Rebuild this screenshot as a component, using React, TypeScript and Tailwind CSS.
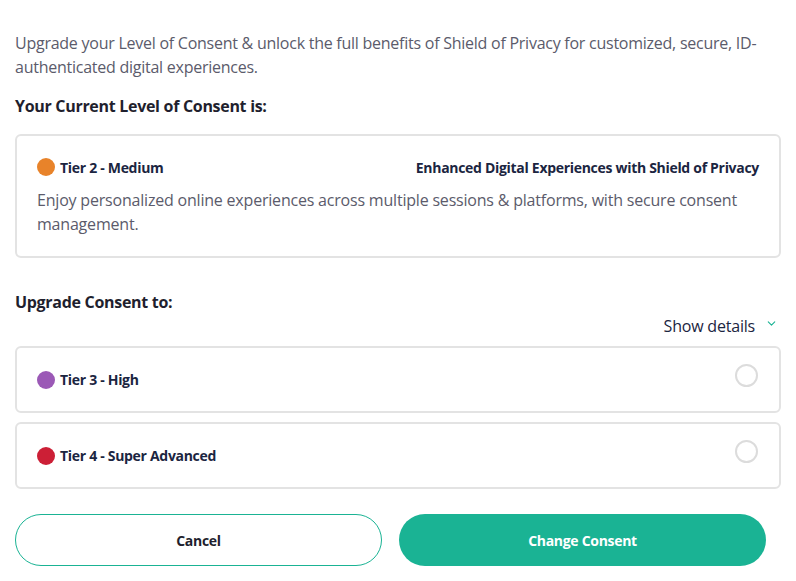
import { ChevronDown } from "lucide-react";

const font = { fontFamily: '"Open Sans", "Noto Sans", sans-serif' };

function TierCard({ color, label }: { color: string; label: string }) {
  return (
    <div className="flex items-center justify-between h-[67px] border-2 border-[#e3e3e3] rounded-md pl-5 pr-5">
      <div className="flex items-center gap-[5px]">
        <span className={`w-[18px] h-[18px] rounded-full ${color}`} />
        <span className="text-[14px] font-bold tracking-[-0.3px] text-[#1b2541]">{label}</span>
      </div>
      <span className="w-[23px] h-[23px] rounded-full border-2 border-[#dcdcdc] -mt-[8px] mr-[1px]" />
    </div>
  );
}

export default function App() {
  return (
    <div className="w-[796px] h-[581px] bg-white px-[15px] pt-[31px]" style={font}>
      <p className="text-[16px] leading-6 tracking-[-0.25px] text-[#5b5b6b]">
        Upgrade your Level of Consent &amp; unlock the full benefits of Shield of Privacy for customized, secure, ID-authenticated digital experiences.
      </p>

      <h2 className="mt-[15px] text-[16px] leading-6 font-bold tracking-[-0.3px] text-[#1f1f2e]">
        Your Current Level of Consent is:
      </h2>

      <div className="mt-4 border-2 border-[#e3e3e3] rounded-md px-5 pt-[21px] pb-[20px]">
        <div className="flex items-center justify-between h-5">
          <div className="flex items-center gap-[5px]">
            <span className="w-[18px] h-[18px] rounded-full bg-[#e8832a]" />
            <span className="text-[14px] font-bold tracking-[-0.3px] text-[#1b2541]">Tier 2 - Medium</span>
          </div>
          <span className="text-[14px] font-bold tracking-[-0.3px] text-[#1b2541]">
            Enhanced Digital Experiences with Shield of Privacy
          </span>
        </div>
        <p className="mt-[11px] text-[16px] leading-6 tracking-[-0.2px] text-[#5b5b6b]">
          Enjoy personalized online experiences across multiple sessions &amp; platforms, with secure consent management.
        </p>
      </div>

      <h2 className="mt-8 text-[16px] leading-6 font-bold tracking-[-0.3px] text-[#1f1f2e]">Upgrade Consent to:</h2>

      <div className="flex justify-end items-center h-6 pr-[3px]">
        <span className="text-[16px] tracking-[-0.2px] text-[#1b2541]">Show details</span>
        <ChevronDown size={13} strokeWidth={2} className="text-[#1ab394] ml-[10px] -mt-[6px]" />
      </div>

      <div className="mt-2 flex flex-col gap-[9px]">
        <TierCard color="bg-[#9b59b6]" label="Tier 3 - High" />
        <TierCard color="bg-[#cc1f36]" label="Tier 4 - Super Advanced" />
      </div>

      <div className="mt-[25px] pr-[15px] grid grid-cols-2 gap-[17px]">
        <button className="h-[52px] rounded-full border border-[#1ab394] bg-white text-[14px] font-bold tracking-[-0.3px] text-[#1f1f2e]">
          Cancel
        </button>
        <button className="h-[52px] rounded-full bg-[#1ab394] text-[14px] font-bold tracking-[-0.3px] text-white">
          Change Consent
        </button>
      </div>
    </div>
  );
}
